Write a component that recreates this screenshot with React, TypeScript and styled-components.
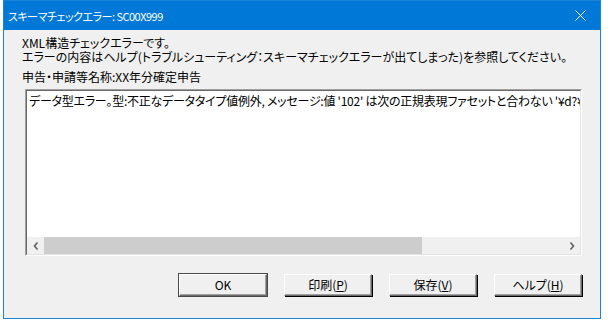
import styled, { createGlobalStyle } from "styled-components";

const GlobalStyle = createGlobalStyle`
  html, body {
    margin: 0;
    padding: 0;
    background: #ffffff;
  }
  body {
    font-family: "Noto Sans CJK JP", "Noto Sans", sans-serif;
    font-size: 12px;
    color: #000;
  }
`;

const Page = styled.div`
  width: 608px;
  height: 324px;
  padding-left: 3px;
  box-sizing: border-box;
`;

const Dialog = styled.div`
  width: 598px;
  height: 319px;
  box-sizing: border-box;
  border: 1px solid #1c84d8;
  background: #f0f0f0;
  display: flex;
  flex-direction: column;
`;

const TitleBar = styled.div`
  height: 29px;
  background: #0078d7;
  display: flex;
  align-items: center;
  justify-content: space-between;
  padding: 0 14px 0 4px;
  color: #fff;
  font-size: 11px;
  letter-spacing: -0.5px;
  font-feature-settings: "palt";
`;

const CloseIcon = () => (
  <svg width="11" height="11" viewBox="0 0 11 11">
    <path d="M0.5 0.5 L10.5 10.5 M10.5 0.5 L0.5 10.5" stroke="#fff" strokeWidth="1" />
  </svg>
);

const Body = styled.div`
  flex: 1;
  display: flex;
  flex-direction: column;
  padding: 6px 18px 0 18px;
  font-feature-settings: "palt";
`;

const Message = styled.div`
  line-height: 14px;
`;

const Label = styled.div`
  margin-top: 6px;
  line-height: 14px;
`;

const TextBox = styled.div`
  margin: 5px 0 0 3px;
  height: 167px;
  box-sizing: border-box;
  border-top: 1px solid #a0a0a0;
  border-left: 1px solid #a0a0a0;
  border-right: 1px solid #ffffff;
  border-bottom: 1px solid #ffffff;
  display: flex;
  flex-direction: column;
`;

const TextInner = styled.div`
  flex: 1;
  display: flex;
  flex-direction: column;
  border-top: 1px solid #696969;
  border-left: 1px solid #696969;
  border-right: 1px solid #e3e3e3;
  border-bottom: 1px solid #e3e3e3;
  background: #fff;
`;

const TextArea = styled.div`
  flex: 1;
  overflow: hidden;
  white-space: nowrap;
  padding: 3px 0 0 2px;
  line-height: 14px;
  letter-spacing: -0.25px;
`;

const ScrollBar = styled.div`
  height: 17px;
  display: flex;
  background: #f0f0f0;
`;

const ScrollArrow = styled.div`
  width: 17px;
  display: flex;
  align-items: center;
  justify-content: center;
`;

const ScrollTrack = styled.div`
  flex: 1;
  display: flex;
`;

const ScrollThumb = styled.div<{ $w: number }>`
  width: ${(p) => p.$w}px;
  background: #cdcdcd;
`;

const Chevron = ({ dir }: { dir: "left" | "right" }) => (
  <svg width="6" height="8" viewBox="0 0 6 8">
    <path
      d={dir === "left" ? "M4.5 0.5 L1.5 4 L4.5 7.5" : "M1.5 0.5 L4.5 4 L1.5 7.5"}
      stroke="#606060"
      strokeWidth="1.6"
      fill="none"
    />
  </svg>
);

const ButtonRow = styled.div`
  margin-top: 18px;
  display: flex;
  justify-content: flex-end;
  gap: 17px;
`;

const Button = styled.div<{ $default?: boolean }>`
  width: 88px;
  height: 22px;
  box-sizing: border-box;
  display: flex;
  align-items: center;
  justify-content: center;
  background: #f0f0f0;
  border-top: 1px solid #ffffff;
  border-left: 1px solid #ffffff;
  border-right: 1px solid #696969;
  border-bottom: 1px solid #696969;
  box-shadow: ${(p) =>
    p.$default
      ? "0 0 0 1px #4a4a4a, inset -1px -1px 0 #a0a0a0"
      : "inset -1px -1px 0 #a0a0a0, 1px 1px 0 #000"};
  font-size: 12px;
  line-height: 14px;
  font-feature-settings: "palt";
`;

const Key = styled.span`
  text-decoration: underline;
  text-underline-offset: 1px;
`;

export default function App() {
  return (
    <>
      <GlobalStyle />
      <Page>
        <Dialog>
          <TitleBar>
            <span>スキーマチェックエラー: SC00X999</span>
            <CloseIcon />
          </TitleBar>
          <Body>
            <Message>XML構造チェックエラーです。</Message>
            <Message>
              エラーの内容はヘルプ(トラブルシューティング：スキーマチェックエラーが出てしまった)を参照してください。
            </Message>
            <Label>申告・申請等名称:XX年分確定申告</Label>
            <TextBox>
              <TextInner>
                <TextArea>
                  データ型エラー。型:不正なデータタイプ値例外, メッセージ:値 '102' は次の正規表現ファセットと合わない '¥d?¥d?'
                </TextArea>
                <ScrollBar>
                  <ScrollArrow>
                    <Chevron dir="left" />
                  </ScrollArrow>
                  <ScrollTrack>
                    <ScrollThumb $w={378} />
                  </ScrollTrack>
                  <ScrollArrow>
                    <Chevron dir="right" />
                  </ScrollArrow>
                </ScrollBar>
              </TextInner>
            </TextBox>
            <ButtonRow>
              <Button $default>OK</Button>
              <Button>
                印刷(<Key>P</Key>)
              </Button>
              <Button>
                保存(<Key>V</Key>)
              </Button>
              <Button>
                ヘルプ(<Key>H</Key>)
              </Button>
            </ButtonRow>
          </Body>
        </Dialog>
      </Page>
    </>
  );
}
